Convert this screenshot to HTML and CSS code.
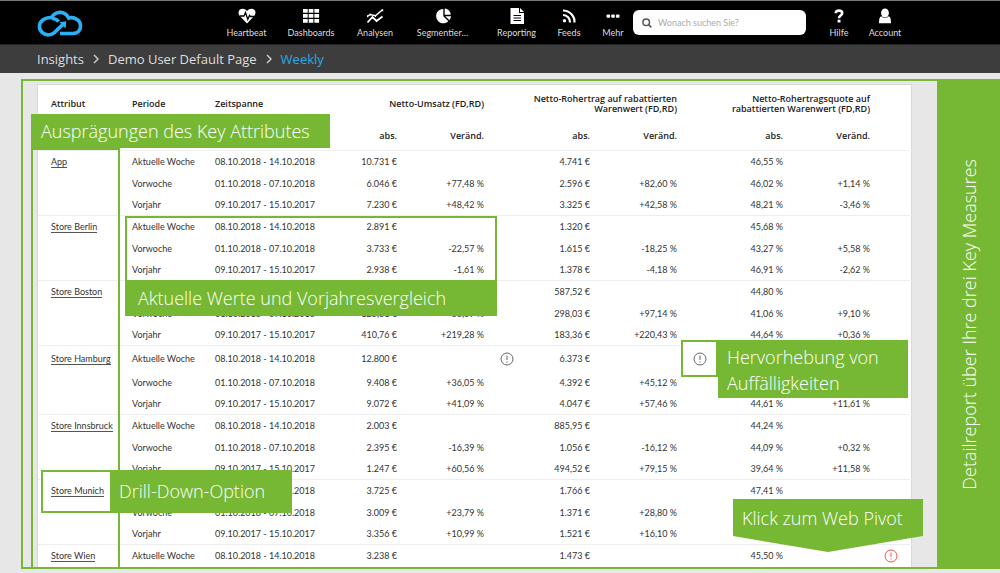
FILE: index.html
```
<!DOCTYPE html>
<html lang="de">
<head>
<meta charset="utf-8">
<meta name="viewport" content="width=device-width, initial-scale=1">
<title>Insights – Weekly</title>
<link rel="stylesheet" href="styles.css">
</head>
<body>
<header class="topbar">
  <a class="logo" href="#" aria-label="Startseite">
    <svg viewBox="0 0 46 28" width="46" height="28" fill="none" stroke="#29b0f5" stroke-width="3.600">
      <path d="M31 7C29 3.500 25 1.900 21.500 2.500C18.200 3.100 15.800 5.300 14.600 7.600C8 7 2.500 11 2.500 16.400C2.500 21.500 7 25.200 12 24.800C16.500 24.500 18.500 21.500 21 19L26.500 14"/>
      <path d="M15 8.500C18 8.500 20 9.600 21.600 11.600"/>
      <path d="M30 8.500C36 6 43.500 9.300 43.500 16C43.500 21 40 23.500 36 23.500H23"/>
      <path d="M22.500 12.300L29.300 11.300L28.600 18.600Z" fill="#29b0f5" stroke="none"/>
    </svg>
  </a>
  <nav class="nav" aria-label="Hauptnavigation">
    <a class="nav-item w-heartbeat" href="#">
      <svg viewBox="0 0 18 16" width="18" height="16"><path fill="#fff" d="M9 15.500L2.300 8.500C-1.200 4.500 1 .8 4.500.8C6.800.8 8.200 2 9 3.300C9.800 2 11.200.8 13.500.8C17 .8 19.200 4.500 15.700 8.500Z"/><path d="M2 8H6L7.500 4.500L9.800 11.500L11.500 7.500L12.500 8.500H16" fill="none" stroke="#000" stroke-width="1.300"/></svg>
      <span>Heartbeat</span></a>
    <a class="nav-item w-dashboards" href="#">
      <svg viewBox="0 0 18 16" width="18" height="16" fill="#fff"><path d="M1 1h4.700v3.700H1zM6.700 1h4.700v3.700H6.700zM12.400 1h4.700v3.700h-4.700zM1 6h4.700v3.700H1zM6.700 6h4.700v3.700H6.700zM12.400 6h4.700v3.700h-4.700zM1 11h4.700v3.700H1zM6.700 11h4.700v3.700H6.700zM12.400 11h4.700v3.700h-4.700z"/></svg>
      <span>Dashboards</span></a>
    <a class="nav-item w-analysen" href="#">
      <svg viewBox="0 0 18 16" width="18" height="16" fill="none" stroke="#fff"><path d="M1.500 14.500L6.500 9L10.500 13L16.500 8.500" stroke-width="1.800"/><path d="M1.500 8.500L4 6.500L9.500 7.800L16.500 1.800" stroke-width="1.500"/><path d="M1 8.300h1M3.600 6.500h1M9 8h1M15.700 2.300h1.500M6 9.500h1M10 13h1" stroke-width="2"/></svg>
      <span>Analysen</span></a>
    <a class="nav-item w-segment" href="#">
      <svg viewBox="0 0 18 16" width="18" height="16" fill="#fff"><path d="M9.300.9A7.200 7.200 0 1 0 14.400 13.200L9.300 8.300Z"/><path d="M10.700.5A6.600 6.600 0 0 1 16.800 6.800H10.700Z"/><path d="M11.200 8.200H17A7 7 0 0 1 15.500 12.200Z"/></svg>
      <span>Segmentier…</span></a>
    <a class="nav-item w-reporting" href="#">
      <svg viewBox="0 0 18 16" width="18" height="16"><path fill="#fff" d="M2.500 0H11V5H16V16H2.500ZM12 0L16 4H12Z"/><path d="M5.500 7.500h7.500M5.500 10h7.500M5.500 12.500h7.500" stroke="#000" stroke-width="1.100"/></svg>
      <span>Reporting</span></a>
    <a class="nav-item w-feeds" href="#">
      <svg viewBox="0 0 18 16" width="18" height="16" fill="none" stroke="#fff" stroke-width="2.200"><circle cx="4.500" cy="12.800" r="1.700" fill="#fff" stroke="none"/><path d="M3 7A7 7 0 0 1 10 14.500M3 2.500A11.500 11.500 0 0 1 14.500 14.500"/></svg>
      <span>Feeds</span></a>
    <a class="nav-item w-mehr" href="#">
      <svg viewBox="0 0 18 16" width="18" height="16" fill="#fff"><rect x="2.500" y="6.500" width="3.600" height="3.300" rx="1"/><rect x="7.200" y="6.500" width="3.600" height="3.300" rx="1"/><rect x="11.900" y="6.500" width="3.600" height="3.300" rx="1"/></svg>
      <span>Mehr</span></a>
  </nav>
  <form class="search" role="search">
    <svg viewBox="0 0 10 10" width="10" height="10" fill="none" stroke="#555" stroke-width="1.500"><circle cx="4.200" cy="4.200" r="3.300"/><path d="M6.600 6.600L9.400 9.400"/></svg>
    <input class="search-input" type="search" aria-label="Suche" placeholder="Wonach suchen Sie?">
  </form>
  <nav class="nav nav-user" aria-label="Benutzer">
    <a class="nav-item w-hilfe" href="#">
      <svg viewBox="0 0 18 16" width="18" height="16"><path d="M5.800 5.300C5.800 3 7.300 2.600 9 2.600C11 2.600 12.200 3.600 12.200 5.200C12.200 7.600 9 7.400 9 10.200" fill="none" stroke="#fff" stroke-width="2.600"/><rect x="7.600" y="11.700" width="2.900" height="2.800" fill="#fff"/></svg>
      <span>Hilfe</span></a>
    <a class="nav-item w-account" href="#">
      <svg viewBox="0 0 18 16" width="18" height="16" fill="#fff"><ellipse cx="9" cy="5" rx="3.900" ry="4.500"/><path d="M5.300 8.300C7 10.500 11 10.500 12.700 8.300C14.500 9 15 11 15 15.200H3C3 11 3.500 9 5.300 8.300Z"/></svg>
      <span>Account</span></a>
  </nav>
</header>
<nav class="breadcrumb" aria-label="Brotkrumen">
  <a href="#">Insights</a>
  <svg viewBox="0 0 6 10" width="6" height="10" fill="none" stroke="#ccc" stroke-width="1.500"><path d="M1 1L5 5L1 9"/></svg>
  <a href="#">Demo User Default Page</a>
  <svg viewBox="0 0 6 10" width="6" height="10" fill="none" stroke="#ccc" stroke-width="1.500"><path d="M1 1L5 5L1 9"/></svg>
  <a class="current" href="#" aria-current="page">Weekly</a>
</nav>
<main class="stage">
  <section class="card">
    <table class="report">
      <colgroup><col class="c-attr"><col class="c-per"><col class="c-span"><col class="c-abs1"><col class="c-chg"><col class="c-ico"><col class="c-abs"><col class="c-chg"><col class="c-ico"><col class="c-abs"><col class="c-chg"><col class="c-end"></colgroup>
      <thead>
        <tr class="head-main"><th class="first">Attribut</th><th>Periode</th><th>Zeitspanne</th><th class="num" colspan="2">Netto-Umsatz (FD,RD)</th><th></th><th class="num" colspan="2">Netto-Rohertrag auf rabattierten<br>Warenwert (FD,RD)</th><th></th><th class="num" colspan="2">Netto-Rohertragsquote auf<br>rabattierten Warenwert (FD,RD)</th><th></th></tr>
        <tr class="head-sub"><th></th><th></th><th></th><th class="num">abs.</th><th class="num">Veränd.</th><th></th><th class="num">abs.</th><th class="num">Veränd.</th><th></th><th class="num">abs.</th><th class="num">Veränd.</th><th></th></tr>
      </thead>
      <tbody>
        <tr><td class="first"><a href="#">App</a></td><td>Aktuelle Woche</td><td>08.10.2018 - 14.10.2018</td><td>10.731 €</td><td></td><td></td><td>4.741 €</td><td></td><td></td><td>46,55 %</td><td></td><td></td></tr>
        <tr><td></td><td>Vorwoche</td><td>01.10.2018 - 07.10.2018</td><td>6.046 €</td><td>+77,48 %</td><td></td><td>2.596 €</td><td>+82,60 %</td><td></td><td>46,02 %</td><td>+1,14 %</td><td></td></tr>
        <tr><td></td><td>Vorjahr</td><td>09.10.2017 - 15.10.2017</td><td>7.230 €</td><td>+48,42 %</td><td></td><td>3.325 €</td><td>+42,58 %</td><td></td><td>48,21 %</td><td>-3,46 %</td><td></td></tr>
      </tbody>
      <tbody>
        <tr><td class="first"><a href="#">Store Berlin</a></td><td>Aktuelle Woche</td><td>08.10.2018 - 14.10.2018</td><td>2.891 €</td><td></td><td></td><td>1.320 €</td><td></td><td></td><td>45,68 %</td><td></td><td></td></tr>
        <tr><td></td><td>Vorwoche</td><td>01.10.2018 - 07.10.2018</td><td>3.733 €</td><td>-22,57 %</td><td></td><td>1.615 €</td><td>-18,25 %</td><td></td><td>43,27 %</td><td>+5,58 %</td><td></td></tr>
        <tr><td></td><td>Vorjahr</td><td>09.10.2017 - 15.10.2017</td><td>2.938 €</td><td>-1,61 %</td><td></td><td>1.378 €</td><td>-4,18 %</td><td></td><td>46,91 %</td><td>-2,62 %</td><td></td></tr>
      </tbody>
      <tbody>
        <tr><td class="first"><a href="#">Store Boston</a></td><td></td><td></td><td></td><td></td><td></td><td>587,52 €</td><td></td><td></td><td>44,80 %</td><td></td><td></td></tr>
        <tr><td></td><td>Vorwoche</td><td>01.10.2018 - 07.10.2018</td><td>125,81 €</td><td>+86,89 %</td><td></td><td>298,03 €</td><td>+97,14 %</td><td></td><td>41,06 %</td><td>+9,10 %</td><td></td></tr>
        <tr><td></td><td>Vorjahr</td><td>09.10.2017 - 15.10.2017</td><td>410,76 €</td><td>+219,28 %</td><td></td><td>183,36 €</td><td>+220,43 %</td><td></td><td>44,64 %</td><td>+0,36 %</td><td></td></tr>
      </tbody>
      <tbody class="flagged">
        <tr><td class="first"><a href="#">Store Hamburg</a></td><td>Aktuelle Woche</td><td>08.10.2018 - 14.10.2018</td><td>12.800 €</td><td></td><td><svg class="alert" viewBox="0 0 14 14" width="14" height="14"><circle cx="7" cy="7" r="6"/><path d="M7 3.500V8M7 9.300V10.500"/></svg></td><td>6.373 €</td><td></td><td><svg class="alert raised" viewBox="0 0 14 14" width="14" height="14"><circle cx="7" cy="7" r="6"/><path d="M7 3.500V8M7 9.300V10.500"/></svg></td><td></td><td></td><td></td></tr>
        <tr><td></td><td>Vorwoche</td><td>01.10.2018 - 07.10.2018</td><td>9.408 €</td><td>+36,05 %</td><td></td><td>4.392 €</td><td>+45,12 %</td><td></td><td></td><td></td><td></td></tr>
        <tr><td></td><td>Vorjahr</td><td>09.10.2017 - 15.10.2017</td><td>9.072 €</td><td>+41,09 %</td><td></td><td>4.047 €</td><td>+57,46 %</td><td></td><td>44,61 %</td><td>+11,61 %</td><td></td></tr>
      </tbody>
      <tbody>
        <tr><td class="first"><a href="#">Store Innsbruck</a></td><td>Aktuelle Woche</td><td>08.10.2018 - 14.10.2018</td><td>2.003 €</td><td></td><td></td><td>885,95 €</td><td></td><td></td><td>44,24 %</td><td></td><td></td></tr>
        <tr><td></td><td>Vorwoche</td><td>01.10.2018 - 07.10.2018</td><td>2.395 €</td><td>-16,39 %</td><td></td><td>1.056 €</td><td>-16,12 %</td><td></td><td>44,09 %</td><td>+0,32 %</td><td></td></tr>
        <tr><td></td><td>Vorjahr</td><td>09.10.2017 - 15.10.2017</td><td>1.247 €</td><td>+60,56 %</td><td></td><td>494,52 €</td><td>+79,15 %</td><td></td><td>39,64 %</td><td>+11,58 %</td><td></td></tr>
      </tbody>
      <tbody>
        <tr><td class="first"><a class="raised" href="#">Store Munich</a></td><td></td><td>08.10.2018 - 14.10.2018</td><td>3.725 €</td><td></td><td></td><td>1.766 €</td><td></td><td></td><td>47,41 %</td><td></td><td></td></tr>
        <tr><td></td><td>Vorwoche</td><td>01.10.2018 - 07.10.2018</td><td>3.009 €</td><td>+23,79 %</td><td></td><td>1.371 €</td><td>+28,80 %</td><td></td><td></td><td></td><td></td></tr>
        <tr><td></td><td>Vorjahr</td><td>09.10.2017 - 15.10.2017</td><td>3.356 €</td><td>+10,99 %</td><td></td><td>1.521 €</td><td>+16,10 %</td><td></td><td></td><td></td><td></td></tr>
      </tbody>
      <tbody>
        <tr><td class="first"><a href="#">Store Wien</a></td><td>Aktuelle Woche</td><td>08.10.2018 - 14.10.2018</td><td>3.238 €</td><td></td><td></td><td>1.473 €</td><td></td><td></td><td>45,50 %</td><td></td><td><svg class="alert red" viewBox="0 0 14 14" width="14" height="14"><circle cx="7" cy="7" r="6"/><path d="M7 3.500V8M7 9.300V10.500"/></svg></td></tr>
      </tbody>
    </table>
  </section>
  <div class="frame frame-report"></div>
  <div class="frame frame-attributes"></div>
  <div class="frame frame-values"></div>
  <div class="frame frame-alert"></div>
  <div class="frame frame-drill"></div>
  <p class="note note-attributes">Ausprägungen des Key Attributes</p>
  <p class="note note-values">Aktuelle Werte und Vorjahresvergleich</p>
  <p class="note note-alert">Hervorhebung von<br>Auffälligkeiten</p>
  <p class="note note-drill">Drill-Down-Option</p>
  <p class="note note-pivot">Klick zum Web Pivot</p>
  <aside class="note note-side"><span>Detailreport über Ihre drei Key Measures</span></aside>
</main>
</body>
</html>
```
FILE: styles.css
```
* { box-sizing: border-box; }

body {
  margin: 0;
  min-height: 100vh;
  display: flex;
  flex-direction: column;
  overflow: hidden;
  background: #e7e7e7;
  color: #333;
  font: 9px/12px Lato, "Open Sans", sans-serif;
}

a { color: inherit; text-decoration: none; }
p { margin: 0; }

.topbar {
  display: flex;
  align-items: center;
  height: 44px;
  padding: 2px 37px 0;
  border-top: 1px solid #777;
  background: #000;
  color: #ddd;
}
.logo { width: 189px; line-height: 0; }
.nav { display: flex; gap: 19px; }
.nav-item {
  display: flex;
  flex-direction: column;
  align-items: center;
  gap: 3px;
  white-space: nowrap;
}
.nav-item svg { display: block; }
.w-heartbeat, .w-reporting { width: 41px; }
.w-dashboards { width: 50px; }
.w-analysen { width: 40px; }
.w-segment { width: 57px; }
.w-reporting { margin-left: 6px; }
.w-feeds { width: 26px; }
.w-mehr { width: 24px; }
.w-hilfe { width: 20px; }
.w-account { width: 34px; }
.nav-user { margin-left: 23px; }

.search {
  display: flex;
  align-items: center;
  gap: 6px;
  width: 173px;
  height: 25px;
  margin: 0 0 2px 8px;
  padding: 0 9px;
  border-radius: 6px;
  background: #fff;
}
.search svg { flex: none; }
.search-input {
  flex: 1;
  min-width: 0;
  padding: 0;
  border: 0;
  outline: 0;
  background: none;
  font: inherit;
}
.search-input::placeholder { color: #aaa; opacity: 1; }

.breadcrumb {
  display: flex;
  align-items: center;
  gap: 9px;
  height: 29px;
  padding: 0 37px;
  border-top: 1px solid #222;
  background: #3d3d3d;
  color: #ddd;
  font: 13px/18px "Open Sans", "Noto Sans", sans-serif;
}
.breadcrumb .current { color: #29a9ea; }

.stage {
  flex: 1;
  position: relative;
  padding: 11px 88px 0 37px;
}
.card {
  height: 100%;
  border: 1px solid #d8d8d8;
  border-bottom: 0;
  background: #fff;
}
.report {
  width: 100%;
  table-layout: fixed;
  border-collapse: separate;
  border-spacing: 0;
  white-space: nowrap;
}
.c-attr { width: 94px; }
.c-per { width: 83px; }
.c-span { width: 115px; }
.c-abs1 { width: 67px; }
.c-chg { width: 87px; }
.c-ico { width: 46px; }
.c-abs { width: 60px; }
.c-end { width: 42px; }

.report th, .report td { padding: 0; text-align: left; }
.report th {
  font: 600 9px/10px "Open Sans", "Noto Sans", sans-serif;
  color: #222;
}
.report .first { padding-left: 13px; }
.report th.num,
.report td:nth-child(n + 4) { text-align: right; }
.report td:nth-child(3n + 6) { text-align: center; }
.head-main { height: 38px; }
.head-sub { height: 27px; }
.report .head-sub th { padding-bottom: 2px; }
.report tbody tr { height: 21px; }
.report tbody tr:first-child { height: 23px; }
.report tbody.flagged tr:first-child { height: 27px; }
.report tbody tr:first-child td { border-top: 1px solid #eee; }
.report td a { border-bottom: 1px solid #555; }
.alert {
  display: block;
  margin: 0 auto;
  fill: none;
  stroke: #666;
  stroke-width: 1;
}
.alert.red { stroke: #ee5748; }
.raised { position: relative; z-index: 2; }

.frame { position: absolute; border: 2px solid #76b833; }
.frame-report { left: 21px; right: 61px; top: 6px; height: 490px; }
.frame-attributes { left: 31px; top: 75px; width: 89px; height: 421px; }
.frame-values { left: 125px; top: 143px; width: 372px; height: 66px; }
.frame-alert { left: 681px; top: 267px; width: 37px; height: 37px; background: #fff; }
.frame-drill { left: 41px; top: 397px; width: 71px; height: 43px; background: #fff; }

.note {
  position: absolute;
  background: #76b833;
  color: #fff;
  font: 300 18px/26px "Open Sans", "Noto Sans", sans-serif;
  white-space: nowrap;
}
.note-attributes { left: 31px; top: 41px; width: 299px; padding: 4px 10px; }
.note-values { left: 125px; top: 207px; width: 372px; padding: 5px 13px; }
.note-alert { left: 718px; top: 267px; width: 190px; padding: 4px 9px 2px; }
.note-drill { left: 111px; top: 397px; width: 181px; padding: 8px 8px 9px; }
.note-pivot {
  left: 733px;
  top: 426px;
  width: 190px;
  padding: 6px 9px 21px;
  clip-path: polygon(0 0, 100% 0, 100% 37px, 50% 100%, 0 37px);
}
.note-side {
  right: 0;
  top: 6px;
  width: 63px;
  height: 490px;
  display: flex;
  align-items: center;
  justify-content: center;
}
.note-side span { writing-mode: vertical-rl; transform: rotate(180deg); }
```
